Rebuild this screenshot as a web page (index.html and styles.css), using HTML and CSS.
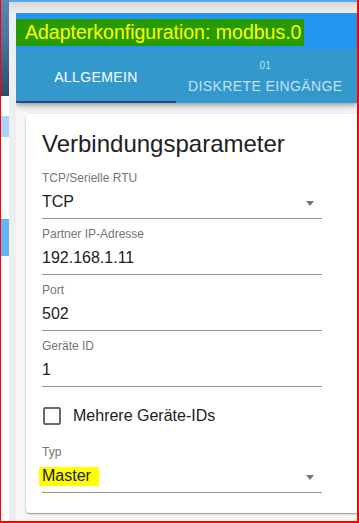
FILE: index.html
```html
<!DOCTYPE html>
<html lang="de">
<head>
<meta charset="utf-8">
<title>Adapterkonfiguration: modbus.0</title>
<link rel="stylesheet" href="styles.css">
</head>
<body>
<div class="frame">
  <div class="side">
    <div class="side-top"></div>
    <div class="side-block side-block--light"></div>
    <div class="side-block side-block--blue"></div>
  </div>
  <div class="main">
    <div class="topline"></div>
    <div class="chrome"></div>
    <div class="window">
      <div class="gutter"></div>
      <div class="app">
        <header class="appbar">
          <div class="titlebar">
            <span class="title-mark">Adapterkonfiguration: modbus.0</span>
          </div>
          <nav class="tabs">
            <div class="tab tab--active">ALLGEMEIN</div>
            <div class="tab tab--stacked">
              <span class="tab-icon">01</span>
              <span class="tab-label">DISKRETE EINGÄNGE</span>
            </div>
          </nav>
        </header>
        <div class="content">
          <section class="card">
            <h2 class="card-title">Verbindungsparameter</h2>
            <div class="form">
              <div class="field">
                <div class="field-label">TCP/Serielle RTU</div>
                <div class="control">
                  <span class="value">TCP</span>
                  <span class="arrow"></span>
                </div>
              </div>
              <div class="field">
                <div class="field-label">Partner IP-Adresse</div>
                <div class="control"><span class="value">192.168.1.11</span></div>
              </div>
              <div class="field">
                <div class="field-label">Port</div>
                <div class="control"><span class="value">502</span></div>
              </div>
              <div class="field">
                <div class="field-label">Geräte ID</div>
                <div class="control"><span class="value">1</span></div>
              </div>
              <label class="check">
                <span class="check-box"></span>
                <span class="check-text">Mehrere Geräte-IDs</span>
              </label>
              <div class="field">
                <div class="field-label">Typ</div>
                <div class="control">
                  <span class="value"><span class="mark-yellow">Master</span></span>
                  <span class="arrow"></span>
                </div>
              </div>
            </div>
          </section>
        </div>
      </div>
    </div>
  </div>
</div>
</body>
</html>
```
FILE: styles.css
```css
html, body {
  margin: 0;
  padding: 0;
}
body {
  width: 359px;
  height: 523px;
  overflow: hidden;
  font-family: "Liberation Sans", Arial, sans-serif;
  background: #ffffff;
}
.frame {
  box-sizing: border-box;
  width: 359px;
  height: 523px;
  border-left: 1px solid #ff0000;
  border-right: 2px solid #ff0000;
  border-bottom: 2px solid #ff0000;
  display: grid;
  grid-template-columns: 8px 1fr;
  overflow: hidden;
}
.side {
  display: flex;
  flex-direction: column;
  background: #ffffff;
}
.side-top {
  height: 96px;
  background: linear-gradient(170deg, #5a8ab3 0%, #44739c 45%, #2f4a66 100%);
}
.side-block--light {
  margin-top: 20px;
  height: 21px;
  background: #a9d4f7;
}
.side-block--blue {
  margin-top: 82px;
  height: 37px;
  background: #64b5f6;
}
.main {
  display: flex;
  flex-direction: column;
  min-width: 0;
  overflow: hidden;
}
.topline {
  height: 2px;
  background: #58aaf0;
}
.chrome {
  height: 11px;
  background: linear-gradient(#d7d7d7, #eeeeee);
}
.window {
  flex: 1;
  display: grid;
  grid-template-columns: 7px 1fr;
  min-height: 0;
}
.gutter {
  background: #eeeeee;
}
.app {
  background: #f6f6f6;
  min-width: 0;
  overflow: hidden;
  display: flex;
  flex-direction: column;
}
.appbar {
  position: relative;
  z-index: 1;
  box-shadow: 0 2px 4px -1px rgba(0,0,0,.2), 0 4px 5px 0 rgba(0,0,0,.14), 0 1px 10px 0 rgba(0,0,0,.12);
}
.titlebar {
  box-sizing: border-box;
  height: 36px;
  padding-top: 6px;
  background: #2196f3;
  display: flex;
  align-items: flex-start;
}
.title-mark {
  display: inline-block;
  background: #279a00;
  color: #ffff00;
  font-size: 19.5px;
  line-height: 27px;
  padding: 0 3px 0 9px;
  white-space: nowrap;
}
.tabs {
  height: 54px;
  background: #3399cc;
  display: flex;
}
.tab {
  box-sizing: border-box;
  height: 54px;
  display: flex;
  align-items: center;
  justify-content: center;
  color: rgba(255,255,255,.72);
  font-size: 14px;
  line-height: 16px;
  letter-spacing: 0.4px;
  white-space: nowrap;
}
.tab--active {
  width: 160px;
  color: #ffffff;
  padding-top: 4px;
  border-bottom: 2px solid #1c4d89;
}
.tab--stacked {
  flex-direction: column;
  padding: 1px 12px 0;
  gap: 6px;
}
.tab-icon {
  font-size: 10px;
  line-height: 12px;
  letter-spacing: 0.3px;
}
.tab-label {
  line-height: 16px;
}
.content {
  flex: 1;
  padding: 11px 0 0 10px;
}
.card {
  box-sizing: border-box;
  width: 345px;
  background: #ffffff;
  border-radius: 4px;
  padding: 16px 16px 20px;
  box-shadow: 0 1px 3px 0 rgba(0,0,0,.2), 0 1px 1px 0 rgba(0,0,0,.14), 0 2px 1px -1px rgba(0,0,0,.12);
  color: #212121;
}
.card-title {
  margin: 0 0 13px;
  font-size: 24px;
  line-height: 28px;
  font-weight: normal;
  color: #212121;
}
.form {
  display: flex;
  flex-direction: column;
  gap: 8px;
}
.field {
  width: 280px;
}
.field-label {
  font-size: 12px;
  line-height: 14px;
  color: #757575;
}
.control {
  box-sizing: border-box;
  height: 27px;
  margin-top: 7px;
  padding-bottom: 7px;
  border-bottom: 1px solid #949494;
  display: flex;
  align-items: flex-start;
  justify-content: space-between;
}
.value {
  font-size: 16px;
  line-height: 19px;
  color: #212121;
}
.arrow {
  width: 0;
  height: 0;
  margin: 9px 8px 0 0;
  border-left: 4.5px solid transparent;
  border-right: 4.5px solid transparent;
  border-top: 5px solid #757575;
}
.mark-yellow {
  background: #ffff00;
  padding: 0 8px 2px 3px;
  margin-left: -3px;
}
.check {
  margin: 12px 0 12px 1px;
  height: 18px;
  display: flex;
  align-items: center;
}
.check-box {
  box-sizing: border-box;
  width: 18px;
  height: 18px;
  border: 2px solid #696969;
  border-radius: 2px;
}
.check-text {
  margin-left: 12px;
  font-size: 16px;
  line-height: 18px;
  color: #212121;
}
```
